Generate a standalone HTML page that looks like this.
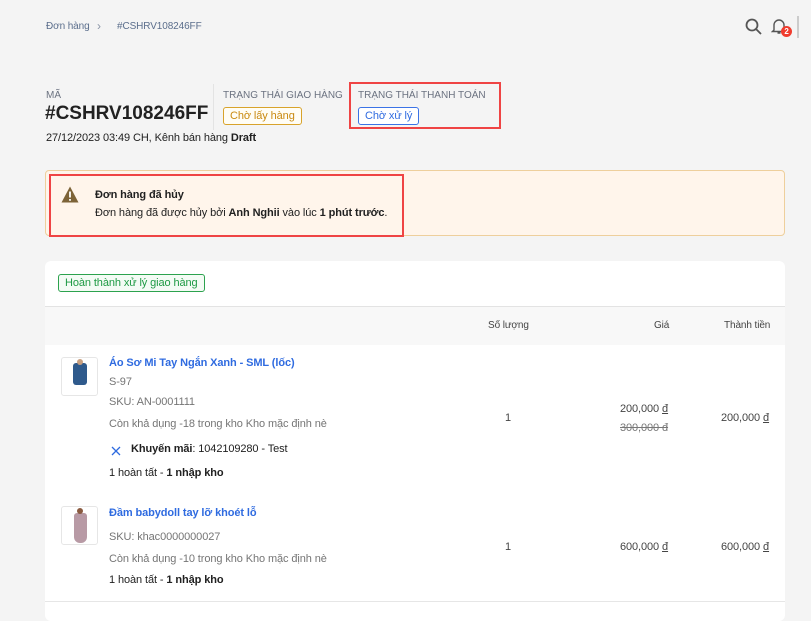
<!DOCTYPE html>
<html><head><meta charset="utf-8"><style>
*{box-sizing:border-box;margin:0;padding:0}
body{width:811px;height:612px;overflow:hidden;background:#f4f4f4;font-family:"Liberation Sans",sans-serif;color:#212121;position:relative;font-size:11px;letter-spacing:-0.1px}
.a{position:absolute;white-space:nowrap}
.badge{position:absolute;border:1px solid;border-radius:3px;font-size:11px;line-height:16px;padding:0 6px;background:#fff}
.red{position:absolute;border:2px solid #ef4444}
.blue{color:#2f6be0;font-weight:bold}
.g{color:#757575}
.lab{font-size:10px;color:#6b7280;letter-spacing:0}
</style></head><body>
<div class="a" style="left:46px;top:21px;font-size:10px;color:#5b6e8c">Đơn hàng</div>
<div class="a" style="left:97px;top:19px;font-size:12px;color:#8a94a6">›</div>
<div class="a" style="left:117px;top:21px;font-size:10px;color:#5b6e8c">#CSHRV108246FF</div>
<svg class="a" style="left:745px;top:18px" width="18" height="18" viewBox="0 0 18 18"><circle cx="7" cy="7" r="5.5" fill="none" stroke="#555" stroke-width="1.8"/><path d="M11 11l5 5" stroke="#555" stroke-width="1.8"/></svg>
<svg class="a" style="left:771px;top:17px" width="16" height="18" viewBox="0 0 16 18"><path d="M3 13V8a5 5 0 0 1 10 0v5l1.5 1.5h-13z M6.5 16h3" fill="none" stroke="#555" stroke-width="1.4"/></svg>
<div class="a" style="left:781px;top:26px;width:11px;height:11px;border-radius:50%;background:#f03c2e;color:#fff;font-size:8px;font-weight:bold;text-align:center;line-height:11px">2</div>
<div class="a" style="left:797px;top:16px;width:2px;height:22px;background:#ccc"></div>

<div class="a lab" style="left:46px;top:90px">MÃ</div>
<div class="a" style="left:45px;top:103px;font-size:19px;font-weight:bold;color:#212121;letter-spacing:0">#CSHRV108246FF</div>
<div class="a" style="left:213px;top:84px;width:1px;height:46px;background:#e3e3e3"></div>
<div class="a lab" style="left:223px;top:90px">TRẠNG THÁI GIAO HÀNG</div>
<div class="badge" style="left:223px;top:107px;border-color:#d8a32b;color:#c98a10;background:#fffdf5">Chờ lấy hàng</div>
<div class="red" style="left:349px;top:82px;width:152px;height:47px"></div>
<div class="a lab" style="left:358px;top:90px">TRẠNG THÁI THANH TOÁN</div>
<div class="badge" style="left:358px;top:107px;border-color:#3b73e6;color:#2f6be0">Chờ xử lý</div>
<div class="a" style="left:46px;top:132px">27/12/2023 03:49 CH, Kênh bán hàng <b>Draft</b></div>

<div class="a" style="left:45px;top:170px;width:740px;height:66px;background:#fff5eb;border:1px solid #eecf9c;border-radius:4px"></div>
<div class="red" style="left:49px;top:174px;width:355px;height:63px"></div>
<svg class="a" style="left:61px;top:186px" width="18" height="17" viewBox="0 0 18 17"><path d="M9 0.5L17.5 16.5H0.5z" fill="#7d6337"/><rect x="8.1" y="5.5" width="1.8" height="6" fill="#fff"/><rect x="8.1" y="13" width="1.8" height="1.8" fill="#fff"/></svg>
<div class="a" style="left:95px;top:189px;font-weight:bold">Đơn hàng đã hủy</div>
<div class="a" style="left:95px;top:207px">Đơn hàng đã được hủy bởi <b>Anh Nghii</b> vào lúc <b>1 phút trước</b>.</div>

<div class="a" style="left:45px;top:261px;width:740px;height:360px;background:#fff;border-radius:6px"></div>
<div class="badge" style="left:58px;top:274px;border-color:#2ca24e;color:#1e9a44;background:#f4fbf5">Hoàn thành xử lý giao hàng</div>
<div class="a" style="left:45px;top:306px;width:740px;height:39px;background:#f8f8f8;border-top:1px solid #e3e3e3"></div>
<div class="a" style="left:488px;top:320px;font-size:10px;color:#444">Số lượng</div>
<div class="a" style="left:654px;top:320px;font-size:10px;color:#444">Giá</div>
<div class="a" style="left:724px;top:320px;font-size:10px;color:#444">Thành tiền</div>

<div class="a" style="left:61px;top:357px;width:37px;height:39px;border:1px solid #e6e6e6;border-radius:3px;background:#fff"><div style="position:absolute;left:11px;top:5px;width:14px;height:22px;background:#2f5a8c;border-radius:3px"></div><div style="position:absolute;left:15px;top:1px;width:6px;height:6px;background:#c9a080;border-radius:50%"></div></div>
<div class="a blue" style="left:109px;top:357px">Áo Sơ Mi Tay Ngắn Xanh - SML (lốc)</div>
<div class="a g" style="left:109px;top:376px">S-97</div>
<div class="a g" style="left:109px;top:396px">SKU: AN-0001111</div>
<div class="a g" style="left:109px;top:418px">Còn khả dụng -18 trong kho Kho mặc định nè</div>
<svg class="a" style="left:111px;top:446px" width="10" height="10" viewBox="0 0 10 10"><path d="M1 1l8 8M9 1l-8 8" stroke="#2f6be0" stroke-width="1.3"/></svg>
<div class="a" style="left:131px;top:443px"><b>Khuyến mãi</b>: 1042109280 - Test</div>
<div class="a" style="left:109px;top:467px">1 hoàn tất - <b>1 nhập kho</b></div>
<div class="a" style="left:505px;top:412px;color:#444">1</div>
<div class="a" style="left:620px;top:403px;color:#444">200,000 <u>đ</u></div>
<div class="a" style="left:620px;top:422px;color:#777;text-decoration:line-through">300,000 đ</div>
<div class="a" style="left:721px;top:412px;color:#444">200,000 <u>đ</u></div>

<div class="a" style="left:61px;top:506px;width:37px;height:39px;border:1px solid #e6e6e6;border-radius:3px;background:#fff"><div style="position:absolute;left:12px;top:6px;width:13px;height:30px;background:#b89aa5;border-radius:3px 3px 6px 6px"></div><div style="position:absolute;left:15px;top:1px;width:6px;height:6px;background:#8a5a40;border-radius:50%"></div></div>
<div class="a blue" style="left:109px;top:507px">Đầm babydoll tay lỡ khoét lỗ</div>
<div class="a g" style="left:109px;top:531px">SKU: khac0000000027</div>
<div class="a g" style="left:109px;top:553px">Còn khả dụng -10 trong kho Kho mặc định nè</div>
<div class="a" style="left:109px;top:574px">1 hoàn tất - <b>1 nhập kho</b></div>
<div class="a" style="left:505px;top:541px;color:#444">1</div>
<div class="a" style="left:620px;top:541px;color:#444">600,000 <u>đ</u></div>
<div class="a" style="left:721px;top:541px;color:#444">600,000 <u>đ</u></div>
<div class="a" style="left:45px;top:601px;width:740px;height:1px;background:#e6e6e6"></div>
</body></html>
